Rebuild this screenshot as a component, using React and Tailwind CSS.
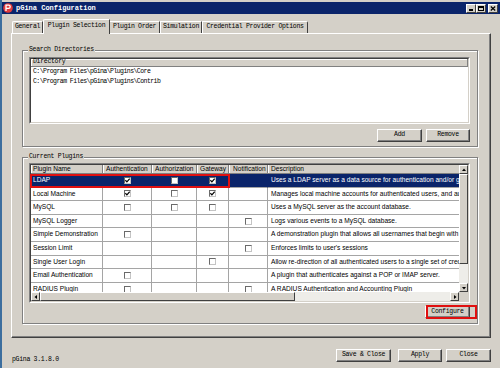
import React from "react";

const MONO = "font-['Liberation_Mono',monospace]";

function Btn({ children, className = "" }) {
  return (
    <div
      className={`flex items-center justify-center bg-[#d4d0c8] border border-t-white border-l-white border-r-[#404040] border-b-[#404040] shadow-[inset_-1px_-1px_0_#808080] font-['Liberation_Mono',monospace] text-[6.5px] tracking-[-0.3px] leading-none text-black ${className}`}
    >
      {children}
    </div>
  );
}

function Check({ checked }) {
  return (
    <div className="w-[7px] h-[7px] bg-white border border-t-[#6a6a6a] border-l-[#6a6a6a] border-r-[#c4c4c4] border-b-[#c4c4c4] flex items-center justify-center">
      {checked ? (
        <svg width="5" height="5" viewBox="0 0 5 5">
          <path d="M0.4 2.2 L1.9 3.8 L4.7 0.7" stroke="#000" strokeWidth="1.2" fill="none" />
        </svg>
      ) : null}
    </div>
  );
}

function Arrow({ dir }) {
  const paths = {
    up: "M1 4 L3 1.5 L5 4 Z",
    down: "M1 2 L3 4.5 L5 2 Z",
    left: "M4 1 L1.5 3 L4 5 Z",
    right: "M2 1 L4.5 3 L2 5 Z",
  };
  return (
    <div className="w-[9px] h-[9px] shrink-0 bg-[#d4d0c8] border border-t-white border-l-white border-r-[#404040] border-b-[#404040] flex items-center justify-center">
      <svg width="6" height="6" viewBox="0 0 6 6">
        <path d={paths[dir]} fill="#000" />
      </svg>
    </div>
  );
}

const plugins = [
  { name: "LDAP", a: 1, z: 0, g: 1, n: null, d: "Uses a LDAP server as a data source for authentication and/or group authorization.", sel: true },
  { name: "Local Machine", a: 1, z: 0, g: 1, n: null, d: "Manages local machine accounts for authenticated users, and authorization." },
  { name: "MySQL", a: 0, z: 0, g: 0, n: null, d: "Uses a MySQL server as the account database." },
  { name: "MySQL Logger", a: null, z: null, g: null, n: 0, d: "Logs various events to a MySQL database." },
  { name: "Simple Demonstration", a: 0, z: null, g: null, n: null, d: "A demonstration plugin that allows all usernames that begin with the letter p." },
  { name: "Session Limit", a: null, z: null, g: null, n: 0, d: "Enforces limits to user's sessions" },
  { name: "Single User Login", a: null, z: null, g: 0, n: null, d: "Allow re-direction of all authenticated users to a single set of credentials." },
  { name: "Email Authentication", a: 0, z: null, g: null, n: null, d: "A plugin that authenticates against a POP or IMAP server." },
  { name: "RADIUS Plugin", a: 0, z: null, g: null, n: 0, d: "A RADIUS Authentication and Accounting Plugin" },
];

function Cell({ v, w, sel }) {
  return (
    <div className={`${w} shrink-0 border-r border-b ${sel ? "border-r-[#0a246a] border-b-[#a5a5a5]" : "border-[#a5a5a5]"} flex items-center justify-center`}>
      {v === null ? null : <Check checked={v === 1} />}
    </div>
  );
}

function HeadCell({ children, w, pl }) {
  return (
    <div className={`${w} ${pl} shrink-0 h-full flex items-center bg-[#d4d0c8] border-r border-r-[#808080] shadow-[inset_1px_0_0_white] whitespace-nowrap overflow-hidden`}>
      {children}
    </div>
  );
}

export default function App() {
  return (
    <div className="relative w-[500px] h-[368px] bg-[#d4d0c8] border-l-2 border-l-[#3c6e9e] overflow-hidden flex flex-col">
      {/* Title bar */}
      <div className="mt-[2px] h-[12px] bg-[#0a246a] flex items-center pl-[1px] pr-[2px]">
        <svg width="10" height="10" viewBox="0 0 10 10">
          <circle cx="5" cy="5" r="4.8" fill="#e23b3b" />
          <path d="M3 8 V2.2 H5.6 A1.6 1.6 0 0 1 5.6 5.4 H3" stroke="#fff" strokeWidth="1.3" fill="none" />
        </svg>
        <span className={`${MONO} ml-[3px] text-[7px] font-bold text-white leading-none`}>pGina Configuration</span>
        <div className="ml-auto flex items-center">
          <div className="w-[10px] h-[9px] bg-[#d4d0c8] border border-t-white border-l-white border-r-[#404040] border-b-[#404040] flex items-end justify-center pb-[1px]">
            <div className="w-[4px] h-[1.5px] bg-black" />
          </div>
          <div className="w-[10px] h-[9px] bg-[#d4d0c8] border border-t-white border-l-white border-r-[#404040] border-b-[#404040] flex items-center justify-center">
            <div className="w-[6px] h-[5px] border border-black border-t-2" />
          </div>
          <div className="ml-[2px] w-[10px] h-[9px] bg-[#d4d0c8] border border-t-white border-l-white border-r-[#404040] border-b-[#404040] flex items-center justify-center">
            <svg width="6" height="5" viewBox="0 0 6 5">
              <path d="M0.8 0.5 L5.2 4.5 M5.2 0.5 L0.8 4.5" stroke="#000" strokeWidth="1.2" />
            </svg>
          </div>
        </div>
      </div>

      {/* Tabs */}
      <div className={`${MONO} mt-[5px] h-[14px] pl-[10px] flex items-end text-[6.5px] tracking-[-0.3px] leading-none text-black`}>
        <div className="w-[31px] h-[12px] flex items-center justify-center border-t border-l border-t-white border-l-white border-r border-r-[#404040] rounded-tl-[2px]">General</div>
        <div className="relative top-[1px] z-10 w-[67px] h-[15px] bg-[#d4d0c8] flex items-center justify-center border-t border-l border-t-white border-l-white border-r border-r-[#404040] rounded-tl-[2px] pb-[2px]">Plugin Selection</div>
        <div className="w-[50px] h-[12px] flex items-center justify-center border-t border-t-white border-r border-r-[#404040]">Plugin Order</div>
        <div className="w-[42px] h-[12px] flex items-center justify-center border-t border-t-white border-l border-l-white border-r border-r-[#404040]">Simulation</div>
        <div className="w-[106px] h-[12px] flex items-center justify-center border-t border-t-white border-l border-l-white border-r border-r-[#404040] rounded-tr-[2px]">Credential Provider Options</div>
      </div>

      {/* Panel */}
      <div className="ml-[9px] w-[480px] h-[305px] border border-t-white border-l-white border-r-[#404040] border-b-[#404040] shadow-[inset_-1px_-1px_0_#808080] flex flex-col">
        {/* Search Directories */}
        <div className="relative mt-[16px] ml-[10px] w-[456px] h-[97px] border border-[#808080] shadow-[inset_1px_1px_0_#fff,1px_1px_0_#fff] flex flex-col pl-[6px] pt-[6px]">
          <span className={`${MONO} absolute left-[5px] top-[-5px] px-[1px] bg-[#d4d0c8] text-[6.5px] tracking-[-0.3px] leading-[8px] text-black`}>Search Directories</span>
          <div className="w-[441px] h-[67px] border border-t-[#808080] border-l-[#808080] border-r-white border-b-white">
            <div className="h-full border border-t-[#404040] border-l-[#404040] border-r-[#d4d0c8] border-b-[#d4d0c8] bg-white flex flex-col">
              <div className={`${MONO} h-[8px] bg-[#d4d0c8] border-b border-b-[#808080] border-r border-r-[#808080] shadow-[inset_1px_1px_0_white] flex items-center pl-[2px] text-[6.5px] tracking-[-0.3px] leading-none text-black`}>Directory</div>
              <div className={`${MONO} h-[10px] flex items-center pl-[2px] text-[6.5px] tracking-[-0.55px] leading-none text-black`}>C:\Program Files\pGina\Plugins\Core</div>
              <div className={`${MONO} h-[10px] flex items-center pl-[2px] text-[6.5px] tracking-[-0.55px] leading-none text-black`}>C:\Program Files\pGina\Plugins\Contrib</div>
            </div>
          </div>
          <div className="mt-[5px] w-[441px] flex justify-end gap-[4px]">
            <Btn className="w-[45px] h-[13px]">Add</Btn>
            <Btn className="w-[44px] h-[13px]">Remove</Btn>
          </div>
        </div>

        {/* Current Plugins */}
        <div className="relative mt-[10px] ml-[10px] w-[456px] h-[167px] border border-[#808080] shadow-[inset_1px_1px_0_#fff,1px_1px_0_#fff] flex flex-col pl-[6px] pt-[5px]">
          <span className={`${MONO} absolute left-[5px] top-[-5px] px-[1px] bg-[#d4d0c8] text-[6.5px] tracking-[-0.3px] leading-[8px] text-black`}>Current Plugins</span>
          <div className="w-[441px] h-[140px] border border-t-[#808080] border-l-[#808080] border-r-white border-b-white">
            <div className="h-full border border-t-[#404040] border-l-[#404040] border-r-[#d4d0c8] border-b-[#d4d0c8] bg-white flex flex-col font-['Liberation_Sans',Arial,sans-serif] text-[6.6px] leading-none text-black">
              <div className="h-[127px] flex">
                <div className="flex-1 overflow-hidden flex flex-col">
                  <div className="w-[487px] h-[9px] shrink-0 flex border-b border-b-[#808080]">
                    <HeadCell w="w-[72px]" pl="pl-[2px]">Plugin Name</HeadCell>
                    <HeadCell w="w-[49px]" pl="pl-[3px]">Authentication</HeadCell>
                    <HeadCell w="w-[45px]" pl="pl-[3px]">Authorization</HeadCell>
                    <HeadCell w="w-[32px]" pl="pl-[3px]">Gateway</HeadCell>
                    <HeadCell w="w-[39px]" pl="pl-[4px]">Notification</HeadCell>
                    <HeadCell w="w-[250px]" pl="pl-[3px]">Description</HeadCell>
                  </div>
                  {plugins.map((p) => (
                    <div key={p.name} className={`w-[487px] h-[13.6px] shrink-0 flex ${p.sel ? "bg-[#0a246a] text-white" : ""}`}>
                      <div className={`w-[72px] shrink-0 border-r border-b ${p.sel ? "border-r-[#0a246a] border-b-[#a5a5a5]" : "border-[#a5a5a5]"} flex items-center pl-[2px] whitespace-nowrap overflow-hidden`}>{p.name}</div>
                      <Cell v={p.a} w="w-[49px]" sel={p.sel} />
                      <Cell v={p.z} w="w-[45px]" sel={p.sel} />
                      <Cell v={p.g} w="w-[32px]" sel={p.sel} />
                      <Cell v={p.n} w="w-[39px]" sel={p.sel} />
                      <div className="w-[250px] shrink-0 border-b border-[#a5a5a5] flex items-center pl-[3px] whitespace-nowrap overflow-hidden">{p.d}</div>
                    </div>
                  ))}
                </div>
                <div className="w-[9px] shrink-0 flex flex-col">
                  <Arrow dir="up" />
                  <div className="h-[90px] bg-[#d4d0c8] border border-t-white border-l-white border-r-[#404040] border-b-[#404040]" />
                  <div className="flex-1 bg-[#eeede9]" />
                  <Arrow dir="down" />
                </div>
              </div>
              <div className="h-[9px] flex">
                <Arrow dir="left" />
                <div className="w-[255px] bg-[#d4d0c8] border border-t-white border-l-white border-r-[#404040] border-b-[#404040]" />
                <div className="flex-1 bg-[#eeede9]" />
                <Arrow dir="right" />
                <div className="w-[9px] bg-[#d4d0c8]" />
              </div>
            </div>
          </div>
          <div className="mt-[3px] w-[441px] flex justify-end">
            <Btn className="w-[45px] h-[12px]">Configure</Btn>
          </div>
        </div>
      </div>

      {/* Bottom */}
      <div className="mt-[11px] h-[13px] flex items-start pl-[10px] pr-[9px]">
        <span className={`${MONO} pt-[7px] text-[6.5px] tracking-[-0.3px] leading-[8px] text-black`}>pGina 3.1.8.0</span>
        <Btn className="ml-auto w-[55px] h-[13px]">Save &amp; Close</Btn>
        <Btn className="ml-[7px] w-[44px] h-[13px]">Apply</Btn>
        <Btn className="ml-[4px] w-[45px] h-[13px]">Close</Btn>
      </div>

      {/* Annotation overlays */}
      <div className="absolute left-[28px] top-[174px] w-[200px] h-[14px] border-2 border-[#e01010]" />
      <div className="absolute left-[424px] top-[305px] w-[51px] h-[14px] border-2 border-[#e01010]" />
    </div>
  );
}
